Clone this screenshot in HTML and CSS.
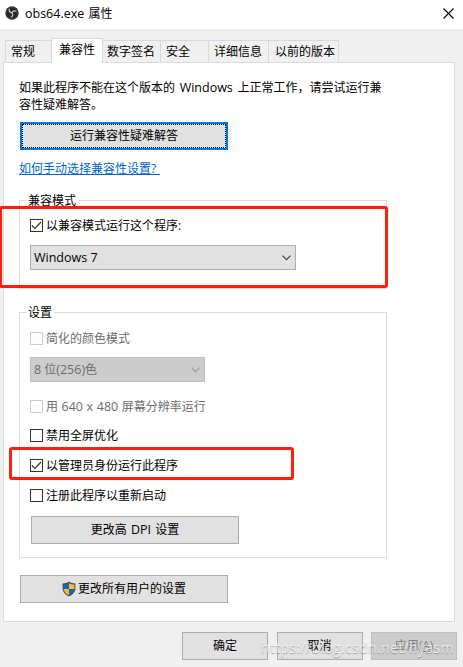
FILE: index.html
```html
<!DOCTYPE html>
<html lang="zh-CN">
  <head>
    <meta charset="UTF-8" />
    <meta name="viewport" content="width=device-width, initial-scale=1.0" />
    <title>obs64.exe 属性</title>
    <link rel="stylesheet" href="styles.css">
  </head>
  <body>
    <div class="window">
      <header class="titlebar">
        <svg class="app-icon" viewBox="0 0 14 14">
          <circle cx="7" cy="7" r="6.7" fill="#262528" />
          <circle cx="7" cy="7" r="5.8" fill="none" stroke="#555" stroke-width="0.6" />
          <g fill="none" stroke="#c8c8c8" stroke-width="1.2" stroke-linecap="round">
            <path d="M4.2 3.2C4 5.2 5.2 6.6 7 6.8" />
            <path d="M10.9 5.2C9.2 4.4 7.5 5.2 7 6.8" />
            <path d="M6.3 11C8 10.2 8.4 8.4 7 6.8" />
          </g>
        </svg>
        <h1 class="title"><span class="latin">obs64.exe</span> 属性</h1>
        <svg class="close" viewBox="0 0 11 11">
          <path d="M.5.5l10 10M10.5.5l-10 10" fill="none" stroke="#000" stroke-width="1.1" />
        </svg>
      </header>

      <nav class="tabs">
        <div class="tab general">常规</div>
        <div class="tab active">兼容性</div>
        <div class="tab signature">数字签名</div>
        <div class="tab security">安全</div>
        <div class="tab details">详细信息</div>
        <div class="tab versions">以前的版本</div>
      </nav>

      <main class="panel">
        <p class="intro">如果此程序不能在这个版本的 <span class="latin">Windows</span> 上正常工作，请尝试运行兼<br />容性疑难解答。</p>
        <button class="btn wide focused">运行兼容性疑难解答</button>
        <a class="link">如何手动选择兼容性设置?</a>

        <section class="group mode">
          <h2 class="legend">兼容模式</h2>
          <div class="check">
            <span class="box"><svg viewBox="0 0 11 11"><path d="M1 5.5L4 8.5L10 2" /></svg></span>
            <span>以兼容模式运行这个程序:</span>
          </div>
          <div class="select">
            <span class="latin">Windows 7</span>
            <svg class="arrow" viewBox="0 0 9 6"><path d="M.5.7l4 4 4-4" /></svg>
          </div>
          <div class="mark mark-mode"></div>
        </section>

        <section class="group settings">
          <h2 class="legend">设置</h2>
          <div class="check disabled"><span class="box"></span><span>简化的颜色模式</span></div>
          <div class="select small disabled">
            <span><span class="latin">8</span> 位<span class="latin">(256)</span>色</span>
            <svg class="arrow" viewBox="0 0 9 6"><path d="M.5.7l4 4 4-4" /></svg>
          </div>
          <div class="check disabled resolution"><span class="box"></span><span>用 <span class="latin">640 x 480</span> 屏幕分辨率运行</span></div>
          <div class="check"><span class="box"></span><span>禁用全屏优化</span></div>
          <div class="check">
            <span class="box"><svg viewBox="0 0 11 11"><path d="M1 5.5L4 8.5L10 2" /></svg></span>
            <span>以管理员身份运行此程序</span>
          </div>
          <div class="check"><span class="box"></span><span>注册此程序以重新启动</span></div>
          <button class="btn wide dpi"><span>更改高 <span class="latin">DPI</span> 设置</span></button>
          <div class="mark mark-admin"></div>
        </section>

        <button class="btn wide all-users">
          <svg class="shield" viewBox="0 0 14 16">
            <path d="M7 .6C5 2 3 2.5.6 2.5V7c0 4 2.6 6.8 6.4 8.4C10.8 13.8 13.4 11 13.4 7V2.5C11 2.5 9 2 7 .6z" fill="#4a4f55" />
            <path d="M7 1.9C5.3 3 3.6 3.5 1.6 3.6V8H7z" fill="#0b68c4" />
            <path d="M7 1.9C8.7 3 10.4 3.5 12.4 3.6V8H7z" fill="#fdb92c" />
            <path d="M7 8H1.7C2 11 4 13 7 14.3z" fill="#fdb92c" />
            <path d="M7 8H12.3C12 11 10 13 7 14.3z" fill="#0b68c4" />
          </svg>
          <span>更改所有用户的设置</span>
        </button>
      </main>

      <footer class="actions">
        <button class="btn">确定</button>
        <button class="btn">取消</button>
        <button class="btn" disabled>应用(<u>A</u>)</button>
      </footer>
      <div class="watermark">https://blog.csdn.net/hyasm</div>
    </div>
  </body>
</html>
```

FILE: styles.css
```css
* {
  box-sizing: border-box;
}
body {
  margin: 0;
  font-family: "Open Sans", "Noto Sans CJK SC", sans-serif;
  font-size: 12px;
  line-height: 17px;
  color: #000;
}
h1,
h2,
p {
  margin: 0;
  font-size: 12px;
  font-weight: normal;
}
.latin {
  font-size: 12.5px;
}
.window {
  position: relative;
  width: 463px;
  height: 667px;
  background: #f0f0f0;
  overflow: hidden;
}
.titlebar {
  display: flex;
  align-items: center;
  height: 29px;
  padding: 0 9px 3px 5px;
  background: #fff;
}
.app-icon {
  width: 14px;
  height: 14px;
}
.title {
  margin-left: 6px;
  word-spacing: 1px;
}
.close {
  width: 11px;
  height: 11px;
  margin-left: auto;
}
.tabs {
  display: flex;
  align-items: flex-end;
  height: 33px;
  padding-left: 5px;
}
.tab {
  height: 22px;
  padding: 2px 0 0 5px;
  border: 1px solid #d9d9d9;
  border-width: 1px 0 0 1px;
  white-space: nowrap;
}
.general {
  width: 46px;
}
.signature {
  width: 57px;
  padding-left: 4px;
  border-left: none;
}
.security {
  width: 48px;
}
.details {
  width: 60px;
}
.versions {
  width: 71px;
  padding-left: 6px;
  border-right-width: 1px;
}
.tab.active {
  position: relative;
  width: 52px;
  height: 25px;
  margin-bottom: -1px;
  padding-left: 7px;
  border-right-width: 1px;
  background: #fff;
}
.panel {
  display: flex;
  flex-direction: column;
  align-items: flex-start;
  width: 452px;
  height: 560px;
  margin-left: 3px;
  padding: 16px 0 0 15px;
  border: 1px solid #dcdcdc;
  background: #fff;
}
.intro {
  white-space: nowrap;
  word-spacing: 1.5px;
}
.btn {
  display: flex;
  justify-content: center;
  align-items: center;
  width: 86px;
  height: 28px;
  padding: 0 0 1px;
  border: 1px solid #adadad;
  background: #e1e1e1;
  font: inherit;
  color: #000;
}
.wide {
  width: 208px;
}
.focused {
  margin: 9px 0 0 1px;
  border: 2px solid #0078d7;
  outline: 1px dotted #000;
  outline-offset: -3px;
}
.link {
  margin-top: 10px;
  padding-right: 4px;
  background: linear-gradient(#0066cc, #0066cc) 0 14px / 100% 1px no-repeat;
  color: #0066cc;
}
.group {
  position: relative;
  width: 368px;
  border: 1px solid #dcdcdc;
  padding-left: 10px;
}
.legend {
  position: absolute;
  top: -9px;
  left: 6px;
  padding: 0 2px;
  background: #fff;
}
.mode {
  height: 89px;
  margin-top: 23px;
  padding-top: 18px;
}
.settings {
  height: 246px;
  margin-top: 23px;
  padding-top: 19px;
}
.check {
  display: flex;
  align-items: center;
  gap: 3px;
  height: 13px;
  margin-bottom: 17px;
  white-space: nowrap;
}
.box {
  width: 13px;
  height: 13px;
  border: 1px solid #333;
  background: #fff;
}
.box svg {
  display: block;
  width: 11px;
  height: 11px;
  fill: none;
  stroke: #333;
  stroke-width: 1.2;
}
.disabled {
  color: #6d6d6d;
}
.disabled .box {
  border-color: #ccc;
}
.resolution {
  margin-bottom: 16px;
  word-spacing: 0.4px;
}
.select {
  display: flex;
  justify-content: space-between;
  align-items: center;
  width: 266px;
  height: 25px;
  margin-top: -4px;
  padding: 0 4px 0 3px;
  border: 1px solid #adadad;
  background: #e1e1e1;
}
.small {
  width: 175px;
  margin: -5px 0 18px;
}
.select.disabled {
  border-color: #bfbfbf;
  background: #ccc;
}
.arrow {
  width: 9px;
  height: 6px;
  fill: none;
  stroke: #444;
  stroke-width: 1.2;
}
.disabled .arrow {
  stroke: #999;
}
.dpi {
  margin: -3px 0 0 1px;
  word-spacing: 1px;
}
.all-users {
  margin: 17px 0 0 1px;
}
.shield {
  width: 14px;
  height: 16px;
  margin-right: 2px;
}
/* red frames drawn over the form */
.mark {
  position: absolute;
  border: 3px solid #ff1f0f;
  border-radius: 3px;
}
.mark-mode {
  top: 5px;
  left: -21px;
  width: 389px;
  height: 82px;
}
.mark-admin {
  top: 134px;
  left: -11px;
  width: 285px;
  height: 33px;
}
.actions {
  display: flex;
  justify-content: flex-end;
  gap: 8.5px;
  padding: 10px 6px 0 0;
}
.btn:disabled {
  border-color: #bfbfbf;
  background: #ccc;
  color: #838383;
}
.watermark {
  position: absolute;
  top: 639px;
  left: 261px;
  font-size: 14px;
  letter-spacing: 0.35px;
  color: rgba(255, 255, 255, 0.75);
  text-shadow: 0 1px 1px rgba(0, 0, 0, 0.3);
  white-space: nowrap;
}
```
